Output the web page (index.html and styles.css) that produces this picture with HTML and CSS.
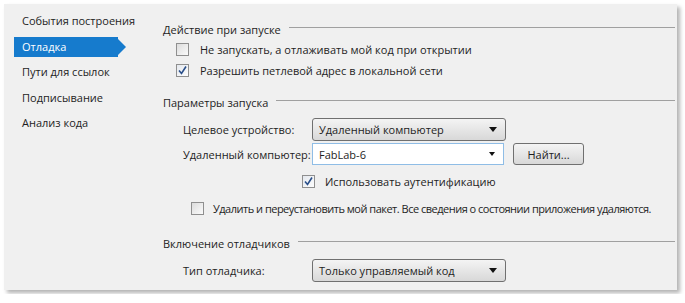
FILE: index.html
```html
<!DOCTYPE html>
<html>
<head>
    <meta charset="utf-8">
    <title>Отладка</title>
    <link rel="stylesheet" href="styles.css">
</head>
<body>
    <div class="window">
        <ul class="nav">
            <li>События построения</li>
            <li class="active">Отладка</li>
            <li>Пути для ссылок</li>
            <li>Подписывание</li>
            <li>Анализ кода</li>
        </ul>

        <div class="content">
            <div class="section-title first"><span>Действие при запуске</span><i></i></div>
            <div class="check-row indent-1 first-row">
                <span class="box"></span>
                <span>Не запускать, а отлаживать мой код при открытии</span>
            </div>
            <div class="check-row indent-1">
                <span class="box checked"><svg width="11" height="11" viewBox="0 0 11 11"><path d="M2 5.5 L4.5 8.5 L9 1.5" fill="none" stroke="#2a4f8a" stroke-width="1.6"/></svg></span>
                <span>Разрешить петлевой адрес в локальной сети</span>
            </div>

            <div class="section-title"><span>Параметры запуска</span><i></i></div>
            <div class="field-row select-row">
                <span class="label">Целевое устройство:</span>
                <div class="select"><span>Удаленный компьютер</span><b class="arrow"></b></div>
            </div>
            <div class="field-row combo-row">
                <span class="label">Удаленный компьютер:</span>
                <div class="combo"><span>FabLab-6</span><b class="arrow"></b></div>
                <button class="btn">Найти...</button>
            </div>
            <div class="check-row indent-auth auth-row">
                <span class="box checked"><svg width="11" height="11" viewBox="0 0 11 11"><path d="M2 5.5 L4.5 8.5 L9 1.5" fill="none" stroke="#2a4f8a" stroke-width="1.6"/></svg></span>
                <span>Использовать аутентификацию</span>
            </div>
            <div class="check-row indent-2 reinstall-row">
                <span class="box"></span>
                <span class="tight">Удалить и переустановить мой пакет. Все сведения о состоянии приложения удаляются.</span>
            </div>

            <div class="section-title third"><span>Включение отладчиков</span><i></i></div>
            <div class="field-row select-row">
                <span class="label">Тип отладчика:</span>
                <div class="select"><span>Только управляемый код</span><b class="arrow"></b></div>
            </div>
        </div>
    </div>
</body>
</html>
```

FILE: styles.css
```css
body {
    margin: 0;
    padding: 4px;
    background-color: #fff;
    font-family: "Open Sans", "Noto Sans", sans-serif;
    font-size: 11px;
    color: #1e1e1e;
}

.window {
    display: flex;
    width: 673px;
    height: 286px;
    box-sizing: border-box;
    background-color: #f0f0f0;
    box-shadow: 3px 3px 4px rgba(0, 0, 0, 0.3);
}

.nav {
    list-style: none;
    margin: 0;
    padding: 7px 0 0 10px;
    width: 159px;
    flex-shrink: 0;
    box-sizing: border-box;
}

.nav li {
    height: 20px;
    line-height: 20px;
    padding-left: 8px;
    margin-bottom: 5.5px;
    width: 104px;
    box-sizing: border-box;
    position: relative;
    white-space: nowrap;
}

.nav li.active {
    background-color: #167bcd;
    color: #fff;
}

.nav li.active::after {
    content: "";
    position: absolute;
    left: 104px;
    top: 2px;
    border-top: 8px solid transparent;
    border-bottom: 8px solid transparent;
    border-left: 8px solid #167bcd;
}

.content {
    flex: 1;
    min-width: 0;
    padding: 17px 2px 0 0;
}

.section-title {
    display: flex;
    align-items: center;
    height: 16px;
    margin-top: 14px;
}

.section-title.first {
    margin-top: 0;
}

.section-title.third {
    margin-top: 18px;
}

.section-title i {
    flex: 1;
    border-top: 1px solid #a0a0a0;
    margin-left: 8px;
    margin-top: -3px;
}

.check-row {
    display: flex;
    align-items: center;
    height: 20px;
    margin-top: 1px;
    white-space: nowrap;
}

.check-row.first-row {
    margin-top: 2px;
}

.indent-1 {
    padding-left: 13px;
}

.indent-1 .box {
    margin-right: 11px;
}

.indent-auth {
    padding-left: 139px;
}

.indent-auth .box {
    margin-right: 10px;
}

.indent-2 {
    padding-left: 28px;
}

.indent-2 .box {
    margin-right: 9px;
}

.tight {
    letter-spacing: -0.5px;
}

.auth-row {
    height: 18px;
    margin-top: 7px;
}

.reinstall-row {
    height: 18px;
    margin-top: 9px;
}

.box {
    width: 13px;
    height: 13px;
    box-sizing: border-box;
    border: 1px solid #8f8f8f;
    background: linear-gradient(135deg, #dcdcdc, #fbfbfb);
    display: flex;
    align-items: center;
    justify-content: center;
    flex-shrink: 0;
}

.box.checked {
    background: linear-gradient(135deg, #e4e8ee, #fdfdfd);
}

.field-row {
    display: flex;
    align-items: center;
    padding-left: 20px;
}

.select-row {
    margin-top: 8px;
}

.combo-row {
    margin-top: 2px;
}

.label {
    width: 129px;
    flex-shrink: 0;
}

.select,
.combo {
    display: flex;
    align-items: center;
    justify-content: space-between;
    box-sizing: border-box;
    padding: 0 8px 0 6px;
    flex-shrink: 0;
}

.select {
    width: 194px;
    height: 23px;
    border: 1px solid #707070;
    border-radius: 3px;
    background: linear-gradient(#f4f4f4, #e6e6e6 50%, #d8d8d8);
}

.combo {
    width: 192px;
    height: 22px;
    border: 1px solid #8fbde6;
    background-color: #fff;
}

.arrow {
    width: 0;
    height: 0;
    border-left: 4px solid transparent;
    border-right: 4px solid transparent;
    border-top: 5px solid #111;
}

.combo .arrow {
    border-left-width: 3.5px;
    border-right-width: 3.5px;
    border-top-width: 4px;
}

.btn {
    margin-left: 9px;
    width: 71px;
    height: 22px;
    border: 1px solid #707070;
    border-radius: 3px;
    background: linear-gradient(#f4f4f4, #e6e6e6 50%, #d8d8d8);
    font-family: inherit;
    font-size: 11px;
    color: #1e1e1e;
    padding: 0;
    flex-shrink: 0;
}
```
